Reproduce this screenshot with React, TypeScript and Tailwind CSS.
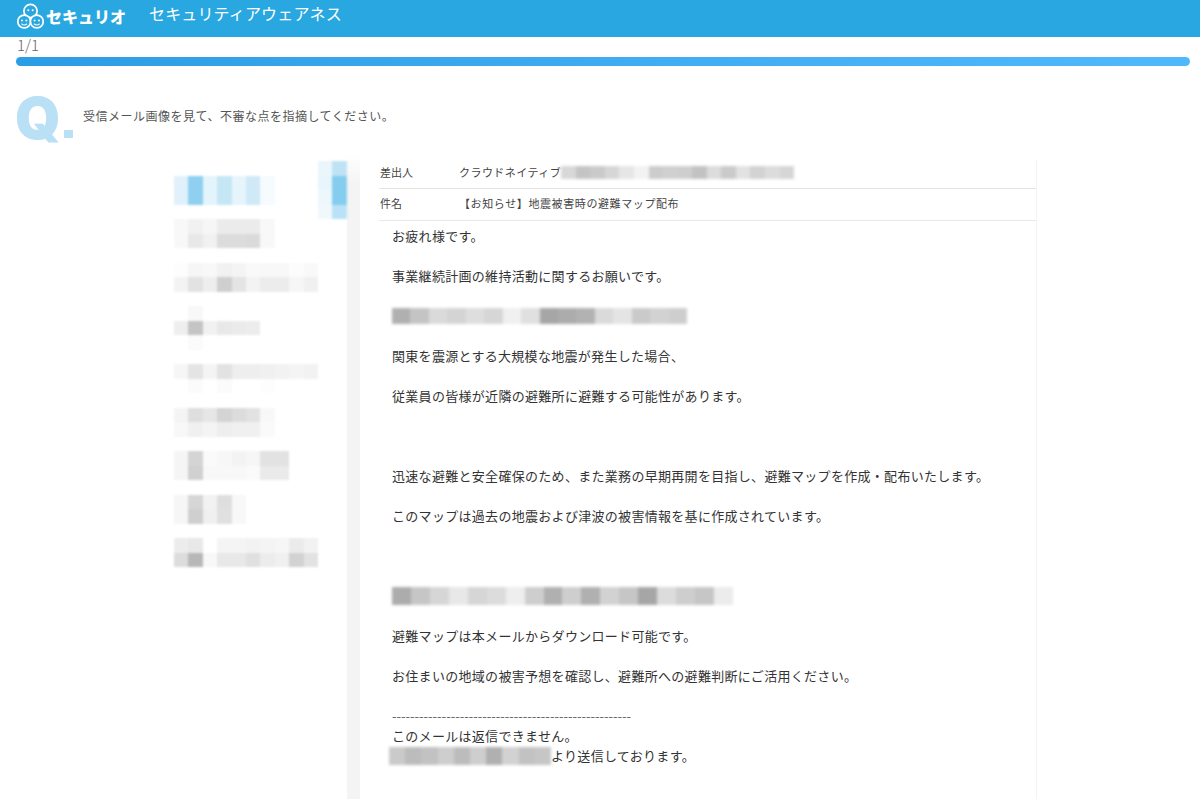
import React from 'react';

const JP = "font-['Noto_Sans_CJK_JP','Noto_Sans',sans-serif]";

// sidebar rows of the mosaic, one array per 14.5px row ('' = empty cell)
const sideRows: string[][] = [
  ['', '', '', '', '', '', '', '', '', '', '#eaf6fc', '#bfe3f4'],
  ['#e0f1fb', '#8fd0f0', '#e4f4fc', '#c5e6f5', '#e6f5fc', '#cfe9f6', '#f6fbfe', '', '', '', '#e8f5fc', '#85cdee'],
  ['#e0f1fb', '#8fd0f0', '#e4f4fc', '#c5e6f5', '#e6f5fc', '#cfe9f6', '#f6fbfe', '', '', '', '#eef7fc', '#85cdee'],
  ['', '', '', '', '', '', '', '', '', '', '#f1f8fc', '#b9e2f6'],
  ['#f8f8f8', '#f1f1f1', '#f6f6f6', '#ebebeb', '#ebebeb', '#ebebeb', '#f8f8f8'],
  ['#f8f8f8', '#e8e8e8', '#f1f1f1', '#dcdcdc', '#dcdcdc', '#dadada', '#f8f8f8'],
  [],
  ['#fdfdfd', '#f6f6f6', '#f8f8f8', '#f1f1f1', '#f4f4f4', '#f9f9f9', '#f8f8f8', '#f8f8f8', '#fcfcfc', '#f9f9f9'],
  ['#f3f3f3', '#e2e2e2', '#eeeeee', '#cfcfcf', '#e4e4e4', '#f3f3f3', '#ececec', '#ececec', '#f6f6f6', '#f0f0f0'],
  [],
  ['', '#f8f8f8'],
  ['#eeeeee', '#c4c4c4', '#f1f1f1', '#e8e8e8', '#ebebeb', '#ececec'],
  ['', '#fbfbfb'],
  [],
  ['#f6f6f6', '#e4e4e4', '#f4f4f4', '#e2e2e2', '#eeeeee', '#eeeeee', '#f0f0f0', '#f2f2f2', '#f4f4f4', '#f2f2f2'],
  ['', '#fbfbfb', '', '#fbfbfb', '', '', '#fdfdfd'],
  [],
  ['#f4f4f4', '#dedede', '#e6e6e6', '#d4d4d4', '#dcdcdc', '#e2e2e2', '#f8f8f8'],
  ['#f8f8f8', '#f0f0f0', '#f4f4f4', '#eeeeee', '#f0f0f0', '#f0f0f0', '#fafafa'],
  [],
  ['#f5f5f5', '#d4d4d4', '#fafafa', '#f7f7f7', '#f3f3f3', '#f6f6f6', '#e2e2e2', '#e2e2e2'],
  ['#f5f5f5', '#d0d0d0', '#f8f8f8', '#f8f8f8', '#f8f8f8', '#fafafa', '#eaeaea', '#eaeaea'],
  [],
  ['#f6f6f6', '#d6d6d6', '#f2f2f2', '#dedede', '#f8f8f8'],
  ['#f6f6f6', '#cfcfcf', '#f0f0f0', '#e0e0e0', '#f8f8f8'],
  [],
  ['#ececec', '#e8e8e8', '', '#f4f4f4', '#f4f4f4', '#f2f2f2', '#f4f4f4', '#f6f6f6', '#ebebeb', '#f2f2f2'],
  ['#dcdcdc', '#b8b8b8', '#f8f8f8', '#e8e8e8', '#e8e8e8', '#e0e0e0', '#ececec', '#f0f0f0', '#d2d2d2', '#e2e2e2'],
];

const senderBar = ['#d8d8d8', '#c4c4c4', '#cacaca', '#d6d6d6', '#e6e6e6', '#f2f2f2', '#cccccc', '#d0d0d0', '#cecece', '#c2c2c2', '#dcdcdc', '#cacaca', '#e2e2e2', '#d2d2d2', '#dcdcdc', '#d6d6d6'];
const noticeBar = ['#b0b0b0', '#c4c4c4', '#dadada', '#d4d4d4', '#dedede', '#d6d6d6', '#f0f0f0', '#e0e0e0', '#a6a6a6', '#acacac', '#b2b2b2', '#dadada', '#e4e4e4', '#cacaca', '#d2d2d2', '#cecece'];
const noticeBar2 = ['#acacac', '#c6c6c6', '#d6d6d6', '#e8e8e8', '#d6d6d6', '#dcdcdc', '#eeeeee', '#cecece', '#b0b0b0', '#cecece', '#b0b0b0', '#d2d2d2', '#c6c6c6', '#a6a6a6', '#dcdcdc', '#cecece', '#c6c6c6', '#ececec'];
const fromBar = ['#cacaca', '#bcbcbc', '#c2c2c2', '#cecece', '#bcbcbc', '#cecece', '#b0b0b0', '#d2d2d2', '#c2c2c2', '#c6c6c6'];

const Bar: React.FC<{ cells: string[]; className: string }> = ({ cells, className }) => (
  <span className={`flex shrink-0 blur-[1.5px] ${className}`}>
    {cells.map((c, i) => (
      <span key={i} className="flex-1" style={{ backgroundColor: c }} />
    ))}
  </span>
);

const Logo: React.FC = () => (
  <svg width="27" height="27" viewBox="0 0 27 27" className="shrink-0" fill="none" stroke="white" strokeWidth="1.7">
    <circle cx="13.5" cy="8" r="6.6" />
    <circle cx="7.2" cy="18.5" r="6.4" fill="#29a7e1" />
    <circle cx="19.8" cy="18.5" r="6.4" fill="#29a7e1" />
    <circle cx="11.3" cy="7.2" r="1" fill="white" stroke="none" />
    <circle cx="15.7" cy="7.2" r="1" fill="white" stroke="none" />
    <circle cx="5" cy="17.5" r="1" fill="white" stroke="none" />
    <circle cx="9.4" cy="17.5" r="1" fill="white" stroke="none" />
    <circle cx="17.6" cy="17.5" r="1" fill="white" stroke="none" />
    <circle cx="22" cy="17.5" r="1" fill="white" stroke="none" />
    <path d="M4.7 21q2.5 2 5 0M17.3 21q2.5 2 5 0" strokeWidth="1.1" strokeLinecap="round" />
  </svg>
);

const Line: React.FC<{ children?: React.ReactNode }> = ({ children }) => (
  <div className="h-5 flex items-center whitespace-nowrap">{children}</div>
);

export default function App() {
  return (
    <div className={`h-[799px] overflow-hidden bg-white ${JP}`}>
      {/* Header */}
      <header className="h-[37px] bg-[#29a7e1] flex items-start pl-[17px] pt-[3px] text-white">
        <Logo />
        <span className="ml-[2px] w-[103px] mt-[1px] text-[16px] leading-[24px] font-black">セキュリオ</span>
        <span className="text-base leading-[20px] tracking-[0.15px]">セキュリティアウェアネス</span>
      </header>

      {/* Progress */}
      <div className="px-4 pr-[10px]">
        <div className="h-5 pl-px text-[15px] font-light leading-[16px] text-[#666]">1/1</div>
        <div className="h-[9px] rounded-full bg-gradient-to-r from-[#2b9de4] to-[#50b9fc]" />
      </div>

      {/* Question */}
      <div className="flex items-start pl-[17px] mt-[27px] h-[60px]">
        <div className="w-[66px] h-[50px] flex items-end font-['Inter',sans-serif] font-black text-[#b9e0f5] text-[58px] leading-[50px]">
          <span className="-mt-[8px] -ml-[2px]">Q</span>
          <span className="mb-[5px] ml-[3px] w-[9px] h-[8px] shrink-0 bg-[#b9e0f5]" />
        </div>
        <p className="mt-[15px] text-xs leading-[16px] tracking-[0.5px] text-[#555]">受信メール画像を見て、不審な点を指摘してください。</p>
      </div>

      <div className="flex ml-[174px] mt-[7px]">
        {/* Blurred sidebar */}
        <div className="w-[173px] shrink-0 mt-[1px] blur-[1px]">
          {sideRows.map((row, i) => (
            <div key={i} className="flex h-[14.5px]">
              {row.map((c, j) => (
                <span key={j} className="w-[14.4px]" style={{ backgroundColor: c || undefined }} />
              ))}
            </div>
          ))}
        </div>
        <div className="w-[13px] h-[650px] shrink-0 -mt-[6px] bg-gradient-to-b from-white to-[#f4f4f4] to-[30px]" />

        {/* Mail */}
        <div className="ml-[19px] w-[658px] h-[640px] border-r border-[#f4f4f4] text-[#444]">
          <div className="flex items-center h-[29px] pb-[4px] border-b border-[#e4e4e4] text-[11px]">
            <span className="w-[80px] pl-px">差出人</span>
            <span className="tracking-[0.45px]">クラウドネイティブ</span>
            <Bar cells={senderBar} className="w-[233px] h-[13px]" />
          </div>
          <div className="flex items-center h-[32px] pb-[2px] border-b border-[#e8e8e8] text-[11px]">
            <span className="w-[80px] pl-px">件名</span>
            <span className="tracking-[0.6px]">【お知らせ】地震被害時の避難マップ配布</span>
          </div>
          <div className="pl-[13px] pt-[5px] text-[13px] tracking-[0.3px] text-[#333]">
            <Line>お疲れ様です。</Line>
            <Line />
            <Line>事業継続計画の維持活動に関するお願いです。</Line>
            <Line />
            <Line><Bar cells={noticeBar} className="w-[295px] h-[16px]" /></Line>
            <Line />
            <Line>関東を震源とする大規模な地震が発生した場合、</Line>
            <Line />
            <Line>従業員の皆様が近隣の避難所に避難する可能性があります。</Line>
            <Line />
            <Line />
            <Line />
            <Line>迅速な避難と安全確保のため、また業務の早期再開を目指し、避難マップを作成・配布いたします。</Line>
            <Line />
            <Line>このマップは過去の地震および津波の被害情報を基に作成されています。</Line>
            <Line />
            <Line />
            <Line />
            <Line><Bar cells={noticeBar2} className="w-[341px] h-[18px]" /></Line>
            <Line />
            <Line>避難マップは本メールからダウンロード可能です。</Line>
            <Line />
            <Line>お住まいの地域の被害予想を確認し、避難所への避難判断にご活用ください。</Line>
            <Line />
            <Line>
              <span className="tracking-normal text-[#666]">-----------------------------------------------------</span>
            </Line>
            <Line>このメールは返信できません。</Line>
            <Line><Bar cells={fromBar} className="-ml-[3px] w-[162px] h-[18px]" />より送信しております。</Line>
          </div>
        </div>
      </div>
    </div>
  );
}
